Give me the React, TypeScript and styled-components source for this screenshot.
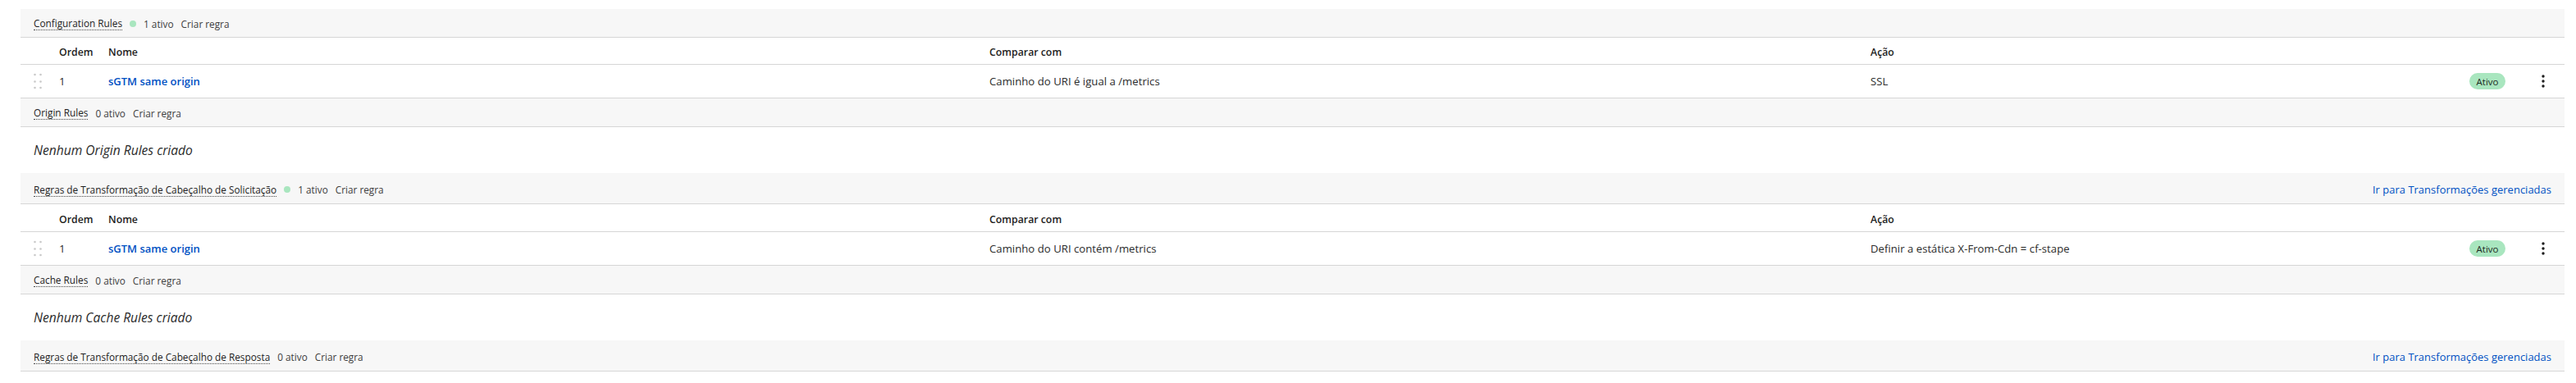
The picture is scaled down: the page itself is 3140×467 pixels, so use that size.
import React from 'react'
import styled, { createGlobalStyle } from 'styled-components'

type Rule = {
  order: number,
  name: string,
  match: string,
  action: string,
}

type Group = {
  title: string,
  active: number,
  rules: Rule[],
  managedLink?: boolean,
}

const groups: Group[] = [
  {
    title: 'Configuration Rules',
    active: 1,
    rules: [{ order: 1, name: 'sGTM same origin', match: 'Caminho do URI é igual a /metrics', action: 'SSL' }],
  },
  { title: 'Origin Rules', active: 0, rules: [] },
  {
    title: 'Regras de Transformação de Cabeçalho de Solicitação',
    active: 1,
    managedLink: true,
    rules: [{ order: 1, name: 'sGTM same origin', match: 'Caminho do URI contém /metrics', action: 'Definir a estática X-From-Cdn = cf-stape' }],
  },
  { title: 'Cache Rules', active: 0, rules: [] },
  { title: 'Regras de Transformação de Cabeçalho de Resposta', active: 0, rules: [], managedLink: true },
]

const GlobalStyle = createGlobalStyle`
  html, body {
    margin: 0;
    background: #ffffff;
    font-family: "Open Sans", "Noto Sans", sans-serif;
    color: #313131;
  }
`

const DragHandle = () => (
  <svg width="10" height="20" viewBox="0 0 10 20">
    {[2, 10.5, 18].map(y => (
      <g key={y} fill="#c9c9c9">
        <circle cx="1.5" cy={y} r="1.3" />
        <circle cx="8.5" cy={y} r="1.3" />
      </g>
    ))}
  </svg>
)

const Kebab = () => (
  <svg width="4" height="16" viewBox="0 0 4 16">
    <g fill="#1d1d1d">
      <circle cx="2" cy="2" r="1.7" />
      <circle cx="2" cy="8" r="1.7" />
      <circle cx="2" cy="14" r="1.7" />
    </g>
  </svg>
)

const App: React.FC = () => {
  return (
    <>
      <GlobalStyle />
      <Page>
        {groups.map((g, i) => {
          const afterEmpty = i > 0 && groups[i - 1].rules.length === 0
          return (
            <Section key={g.title}>
              <GroupHeader $tall={afterEmpty}>
                <Title>{g.title}</Title>
                {g.active > 0 && <Dot />}
                <Meta>{g.active} ativo</Meta>
                <Meta>Criar regra</Meta>
                {g.managedLink && <ManagedLink>Ir para Transformações gerenciadas</ManagedLink>}
              </GroupHeader>
              {g.rules.length > 0 ? (
                <>
                  <HeadRow $first={i === 0}>
                    <Cell />
                    <Cell>Ordem</Cell>
                    <Cell>Nome</Cell>
                    <Cell>Comparar com</Cell>
                    <Cell>Ação</Cell>
                    <Cell />
                    <Cell />
                  </HeadRow>
                  {g.rules.map(r => (
                    <Row key={r.name}>
                      <Cell $pad={16}><DragHandle /></Cell>
                      <Cell>{r.order}</Cell>
                      <Cell><RuleName>{r.name}</RuleName></Cell>
                      <Cell>{r.match}</Cell>
                      <Cell>{r.action}</Cell>
                      <Cell><Badge>Ativo</Badge></Cell>
                      <Cell $center><Kebab /></Cell>
                    </Row>
                  ))}
                </>
              ) : (
                <Empty>Nenhum {g.title} criado</Empty>
              )}
            </Section>
          )
        })}
      </Page>
    </>
  )
}

const Page = styled.div`
  padding: 11px 0 0 25px;
  width: 3101px;
`
const Section = styled.section`
  display: flex;
  flex-direction: column;
`
const GroupHeader = styled.div<{ $tall?: boolean }>`
  display: flex;
  align-items: center;
  gap: 9px;
  height: ${p => (p.$tall ? 38 : 35)}px;
  box-sizing: border-box;
  padding: ${p => (p.$tall ? '3px' : '1px')} 16px 0 16px;
  background: #f7f7f7;
  border-bottom: 1px solid #d6d6d6;
  font-size: 11.8px;
  color: #3b3b3b;
`
const Title = styled.span`
  color: #1d1d1d;
  line-height: 16px;
  border-bottom: 1px dotted #4a4a4a;
`
const Dot = styled.span`
  width: 8px;
  height: 8px;
  border-radius: 50%;
  background: #a9e6bf;
`
const Meta = styled.span`
  color: #404040;
`
const ManagedLink = styled.a`
  margin-left: auto;
  font-size: 13px;
  color: #0051c3;
  cursor: pointer;
`
const gridCols = '47px 60px 1074px 1074px 1fr 64px 52px'
const HeadRow = styled.div<{ $first?: boolean }>`
  display: grid;
  grid-template-columns: ${gridCols};
  align-items: center;
  height: ${p => (p.$first ? 33 : 34)}px;
  box-sizing: border-box;
  padding-top: ${p => (p.$first ? 2 : 4)}px;
  border-bottom: 1px solid #d6d6d6;
  font-size: 12.3px;
  font-weight: 600;
  color: #1d1d1d;
`
const Row = styled.div`
  display: grid;
  grid-template-columns: ${gridCols};
  align-items: center;
  height: 41px;
  box-sizing: border-box;
  border-bottom: 1px solid #d6d6d6;
  font-size: 13.2px;
  color: #2b2b2b;
`
const Cell = styled.div<{ $pad?: number, $center?: boolean }>`
  display: flex;
  align-items: center;
  justify-content: ${p => (p.$center ? 'center' : 'flex-start')};
  padding-left: ${p => p.$pad || 0}px;
  white-space: nowrap;
`
const RuleName = styled.a`
  font-size: 13px;
  font-weight: 600;
  color: #0051c3;
  cursor: pointer;
`
const Badge = styled.span`
  display: inline-flex;
  align-items: center;
  justify-content: center;
  width: 44px;
  height: 20px;
  border-radius: 10px;
  background: #a9e6bf;
  color: #1d2b22;
  font-size: 11.5px;
`
const Empty = styled.div`
  height: 56px;
  display: flex;
  align-items: center;
  padding-left: 16px;
  font-size: 15.6px;
  font-style: italic;
  color: #2b2b2b;
`

export default App
